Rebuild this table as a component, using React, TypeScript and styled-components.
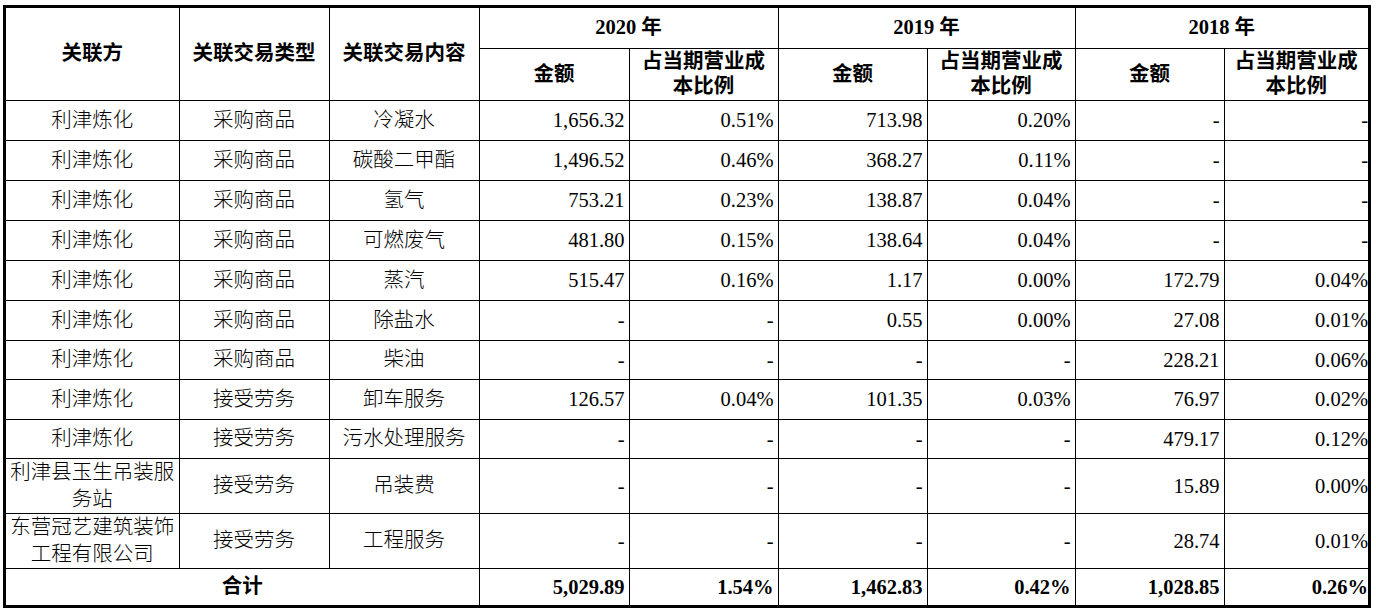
import React from "react";
import styled, { createGlobalStyle } from "styled-components";

const GlobalStyle = createGlobalStyle`
  html, body {
    margin: 0;
    padding: 0;
    background: #ffffff;
  }
  body {
    font-family: "Liberation Serif", "Noto Sans CJK SC", serif;
    color: #000;
  }
`;

const Page = styled.div`
  width: 1376px;
  padding-left: 3px;
  box-sizing: border-box;
`;

const Caption = styled.div`
  height: 5px;
  overflow: hidden;
  display: flex;
  justify-content: flex-end;
  align-items: flex-end;
  padding-right: 22px;
  padding-bottom: 3px;
  box-sizing: border-box;
  font-size: 20.5px;
  line-height: 22px;
  color: #777;
  font-family: "Liberation Serif", "Noto Sans CJK SC", serif;
`;

const Frame = styled.div`
  width: 1368px;
  box-sizing: border-box;
  border: 3px solid #000;
`;

const Table = styled.table`
  width: 1362px;
  table-layout: fixed;
  border-collapse: collapse;
  border-style: hidden;
  font-size: 20.5px;
`;

const HeadRow = styled.tr<{ $h: number }>`
  height: ${(p) => p.$h}px;
`;

const HeadCell = styled.th`
  border: 1px solid #000;
  padding: 0 2px;
  font-weight: 700;
  text-align: center;
  vertical-align: middle;
  line-height: 25px;
  font-family: "Liberation Serif", "Noto Sans CJK SC", serif;
`;

const BodyRow = styled.tr<{ $h: number }>`
  height: ${(p) => p.$h}px;
`;

const TextCell = styled.td<{ $bold?: boolean }>`
  border: 1px solid #000;
  padding: 0 1px;
  text-align: center;
  vertical-align: middle;
  line-height: 27px;
  font-weight: ${(p) => (p.$bold ? 700 : 300)};
  font-family: "Liberation Serif", "Noto Sans CJK SC", serif;
`;

const NumCell = styled.td<{ $bold?: boolean; $last?: boolean }>`
  border: 1px solid #000;
  padding: 0 ${(p) => (p.$last ? 0 : 4)}px 0 0;
  text-align: right;
  vertical-align: middle;
  line-height: 24px;
  white-space: nowrap;
  font-weight: ${(p) => (p.$bold ? 700 : 400)};
  font-family: "Liberation Serif", serif;
`;

const colWidths = [173, 150, 150, 150, 149, 149, 148, 149, 144];

type Row = {
  party: React.ReactNode;
  kind: string;
  content: string;
  values: string[];
  h: number;
};

const rows: Row[] = [
  { party: "利津炼化", kind: "采购商品", content: "冷凝水", values: ["1,656.32", "0.51%", "713.98", "0.20%", "-", "-"], h: 40 },
  { party: "利津炼化", kind: "采购商品", content: "碳酸二甲酯", values: ["1,496.52", "0.46%", "368.27", "0.11%", "-", "-"], h: 40 },
  { party: "利津炼化", kind: "采购商品", content: "氢气", values: ["753.21", "0.23%", "138.87", "0.04%", "-", "-"], h: 40 },
  { party: "利津炼化", kind: "采购商品", content: "可燃废气", values: ["481.80", "0.15%", "138.64", "0.04%", "-", "-"], h: 40 },
  { party: "利津炼化", kind: "采购商品", content: "蒸汽", values: ["515.47", "0.16%", "1.17", "0.00%", "172.79", "0.04%"], h: 40 },
  { party: "利津炼化", kind: "采购商品", content: "除盐水", values: ["-", "-", "0.55", "0.00%", "27.08", "0.01%"], h: 40 },
  { party: "利津炼化", kind: "采购商品", content: "柴油", values: ["-", "-", "-", "-", "228.21", "0.06%"], h: 39 },
  { party: "利津炼化", kind: "接受劳务", content: "卸车服务", values: ["126.57", "0.04%", "101.35", "0.03%", "76.97", "0.02%"], h: 40 },
  { party: "利津炼化", kind: "接受劳务", content: "污水处理服务", values: ["-", "-", "-", "-", "479.17", "0.12%"], h: 39 },
  {
    party: (
      <>
        利津县玉生吊装服
        <br />
        务站
      </>
    ),
    kind: "接受劳务",
    content: "吊装费",
    values: ["-", "-", "-", "-", "15.89", "0.00%"],
    h: 54,
  },
  {
    party: (
      <>
        东营冠艺建筑装饰
        <br />
        工程有限公司
      </>
    ),
    kind: "接受劳务",
    content: "工程服务",
    values: ["-", "-", "-", "-", "28.74", "0.01%"],
    h: 55,
  },
];

const totals = ["5,029.89", "1.54%", "1,462.83", "0.42%", "1,028.85", "0.26%"];

const years = ["2020 年", "2019 年", "2018 年"];

export default function App() {
  return (
    <>
      <GlobalStyle />
      <Page>
        <Caption>单位：万元</Caption>
        <Frame>
          <Table>
            <colgroup>
              {colWidths.map((w, i) => (
                <col key={i} style={{ width: w }} />
              ))}
            </colgroup>
            <thead>
              <HeadRow $h={40}>
                <HeadCell rowSpan={2}>关联方</HeadCell>
                <HeadCell rowSpan={2}>关联交易类型</HeadCell>
                <HeadCell rowSpan={2}>关联交易内容</HeadCell>
                {years.map((y) => (
                  <HeadCell key={y} colSpan={2}>
                    {y}
                  </HeadCell>
                ))}
              </HeadRow>
              <HeadRow $h={52}>
                {years.map((y) => (
                  <React.Fragment key={y}>
                    <HeadCell>金额</HeadCell>
                    <HeadCell>
                      占当期营业成
                      <br />
                      本比例
                    </HeadCell>
                  </React.Fragment>
                ))}
              </HeadRow>
            </thead>
            <tbody>
              {rows.map((r, i) => (
                <BodyRow key={i} $h={r.h}>
                  <TextCell>{r.party}</TextCell>
                  <TextCell>{r.kind}</TextCell>
                  <TextCell>{r.content}</TextCell>
                  {r.values.map((v, j) => (
                    <NumCell key={j} $last={j === r.values.length - 1}>
                      {v}
                    </NumCell>
                  ))}
                </BodyRow>
              ))}
              <BodyRow $h={37}>
                <TextCell colSpan={3} $bold>
                  合计
                </TextCell>
                {totals.map((v, j) => (
                  <NumCell key={j} $bold $last={j === totals.length - 1}>
                    {v}
                  </NumCell>
                ))}
              </BodyRow>
            </tbody>
          </Table>
        </Frame>
      </Page>
    </>
  );
}
